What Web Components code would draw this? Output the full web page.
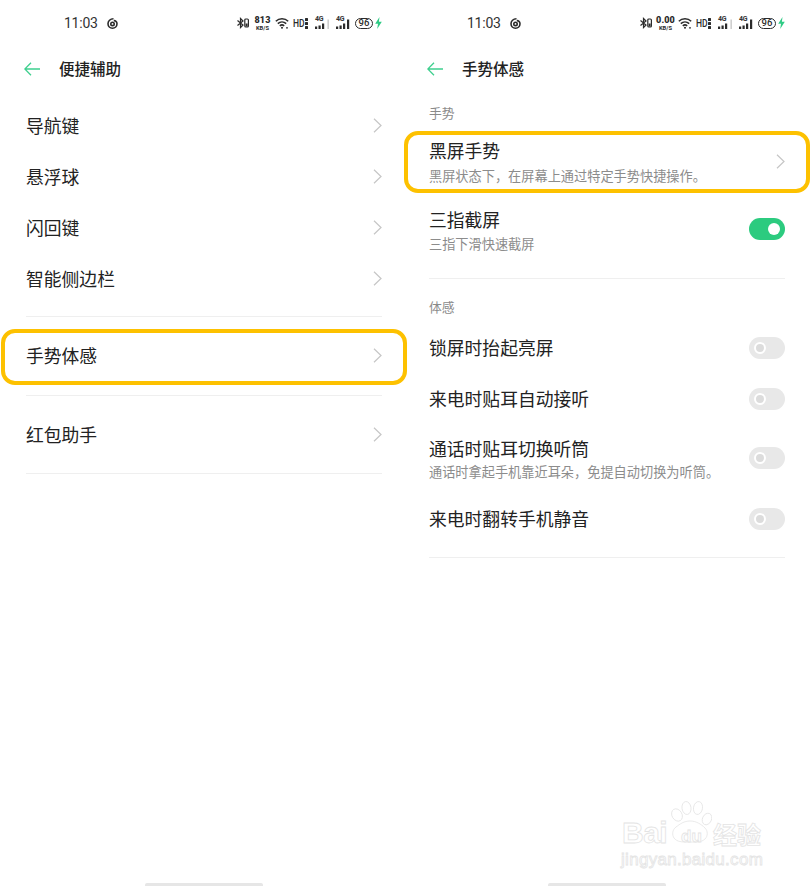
<!DOCTYPE html>
<html lang="zh"><head><meta charset="utf-8"><title>手势体感</title>
<style>
html,body{margin:0;background:#fff}
body{width:810px;height:886px;overflow:hidden;position:relative;font-family:"Noto Sans CJK SC","Noto Sans",sans-serif}
#app{display:grid;grid-template-columns:403px 407px;height:886px}
</style></head><body>
<div id="app">
 <phone-panel title-text="便捷辅助" speed="813">
  <setting-row title="导航键" kind="chevron" style="--ctl:-1px"></setting-row>
  <setting-row title="悬浮球" kind="chevron" style="--ctl:-1px"></setting-row>
  <setting-row title="闪回键" kind="chevron" style="--ctl:-1px"></setting-row>
  <setting-row title="智能侧边栏" kind="chevron" style="--ctl:-1px"></setting-row>
  <list-divider style="--before:11px;--after:14px"></list-divider>
  <setting-row title="手势体感" kind="chevron" highlight style="--ctl:-1px;--hl-top:-2px;--hl-bottom:-3px"></setting-row>
  <list-divider style="--before:13px;--after:14px"></list-divider>
  <setting-row title="红包助手" kind="chevron" style="--ctl:-1px"></setting-row>
  <list-divider style="--before:12px;--after:0px"></list-divider>
 </phone-panel>
 <phone-panel title-text="手势体感" speed="0.00">
  <section-label style="--h:28px;--up:4px">手势</section-label>
  <setting-row title="黑屏手势" sub="黑屏状态下，在屏幕上通过特定手势快捷操作。" kind="chevron" highlight style="--hl-top:2px;--hl-bottom:5px;--ctl:-2px;--gap:6px"></setting-row>
  <setting-row title="三指截屏" sub="三指下滑快速截屏" kind="on" style="--ctl:-3px;--gap:5px"></setting-row>
  <list-divider style="--before:11px;--after:15px"></list-divider>
  <section-label style="--h:29px;--up:2px">体感</section-label>
  <setting-row title="锁屏时抬起亮屏" kind="off"></setting-row>
  <setting-row title="来电时贴耳自动接听" kind="off"></setting-row>
  <setting-row title="通话时贴耳切换听筒" sub="通话时拿起手机靠近耳朵，免提自动切换为听筒。" kind="off" style="--ctl:-1px;--gap:4px;--txt-up:0px"></setting-row>
  <setting-row title="来电时翻转手机静音" kind="off"></setting-row>
  <list-divider style="--before:12px;--after:0px"></list-divider>
 </phone-panel>
</div>
<baidu-mark></baidu-mark>
<script>
function def(name, html){
  customElements.define(name, class extends HTMLElement{
    connectedCallback(){
      if(this.shadowRoot) return;
      const r=this.attachShadow({mode:'open'});
      r.innerHTML = typeof html==='function' ? html(this) : html;
    }
  });
}
const CJK='"Noto Sans CJK SC","Noto Sans",sans-serif';
const bars=(last)=>`<svg width="14" height="14" viewBox="0 0 14 14" fill="#2b2b2b"><rect x="0" y="10.500" width="2.200" height="2.500"/><rect x="3.500" y="9.500" width="2.200" height="3.500"/><rect x="7" y="7.500" width="2.200" height="5.500"/>${last?'<rect x="11" y="3.500" width="2.200" height="9.500"/>':'<rect x="12.500" y="3.500" width="1.300" height="9.500" fill="#c4c4c4"/>'}</svg>`;

def('status-bar', el=>`<style>
:host{display:flex;align-items:center;height:46px;padding-left:64px;box-sizing:border-box;color:#222;font-family:Roboto,"Liberation Sans",sans-serif}
.time{font-size:14px;letter-spacing:-.25px;color:#333;width:43px;flex:none}
svg{display:block;flex:none}
.gap{flex:none;width:119px}
.sp{margin-left:6px;display:flex;flex-direction:column;align-items:center;width:15px;line-height:1;font-weight:700;color:#2b2b2b;flex:none}
.sp b{font-size:9px;line-height:9px;letter-spacing:.1px}.sp i{font-style:normal;font-size:5.8px;line-height:6px}
.hd{display:block;font-size:11.500px;font-weight:500;margin-left:4px;width:12px;color:#2b2b2b;flex:none;white-space:nowrap;transform:scaleX(.74);transform-origin:left center}
.sig{position:relative;width:14px;height:14px;flex:none}
.sig span{position:absolute;left:0;top:-1px;font-size:7px;font-weight:700;color:#333;line-height:8px;letter-spacing:-.2px}
.bat{box-sizing:border-box;margin-left:5px;width:18px;height:11px;border:1.500px solid #2b2b2b;border-radius:5.500px;font-size:9.500px;line-height:8px;text-align:center;color:#2b2b2b;flex:none;font-weight:500}
</style>
<span class="time">11:03</span>
<svg width="11" height="11" viewBox="0 0 11 11" fill="none" stroke="#2b2b2b" stroke-width="1.600"><path d="M6.500 .8C3.200 .8 1 3 1 5.800 1 8.300 3 10.200 5.500 10.200s4.500-1.900 4.500-4.400c0-2.100-1.700-3.300-3.200-3.100"/><circle cx="5.500" cy="5.900" r="1.700"/></svg>
<span class="gap"></span>
<svg width="12" height="12" viewBox="0 0 12 12" fill="none" stroke="#2b2b2b" stroke-width="1.200"><path d="M.5 3.500 6 8 3.500 10.500V1.500L6 4 .5 8.500"/><rect x="7.800" y="2" width="3.600" height="8" rx="1"/><rect x="8.600" y="6.500" width="2" height="3" fill="#2b2b2b" stroke="none"/></svg>
<span class="sp"><b>${el.getAttribute('speed')}</b><i>KB/S</i></span>
<svg style="margin-left:5px" width="14" height="12" viewBox="0 0 14 12" fill="none" stroke="#2b2b2b" stroke-width="1.500"><path d="M.8 4.200C4.200.8 9.800.8 13.200 4.200M2.800 6.600C5.200 4.400 8.800 4.400 11.200 6.600M4.800 8.800C6 7.800 8 7.800 9.200 8.800"/><circle cx="7" cy="10.800" r="1" fill="#2b2b2b" stroke="none"/><circle cx="12" cy="10.800" r=".9" fill="#2b2b2b" stroke="none"/></svg>
<span class="hd">HD</span>
<svg width="3" height="11" viewBox="0 0 3 11" fill="#2b2b2b"><rect width="3" height="3" rx=".5"/><rect y="4" width="3" height="3" rx=".5"/><rect y="8" width="3" height="3" rx=".5"/></svg>
<span class="sig" style="margin-left:7px"><span>4G</span>${bars(false)}</span>
<span class="sig" style="margin-left:7px"><span>4G</span>${bars(true)}</span>
<span class="bat">96</span>
<svg style="margin-left:2px" width="7" height="12" viewBox="0 0 7 12" fill="#2fcb85"><path d="M4.500 0 .2 6.800H3L2.200 12 6.800 4.800H3.900Z"/></svg>`);

def('nav-header', el=>`<style>
:host{display:flex;align-items:center;height:46px;padding-left:24px;box-sizing:border-box}
svg{display:block;flex:none}
span{margin-left:19px;font:500 15.500px/20px ${CJK};color:#222;position:relative;top:-1px}
</style>
<svg width="16" height="14" viewBox="0 0 16 14" fill="none" stroke="#3ecf8e" stroke-width="1.300"><path d="M16 7H.8M7 .8.800 7 7 13.200"/></svg>
<span>${el.getAttribute('title-text')}</span>`);

def('phone-panel', el=>`<style>
:host{display:block;min-width:0}
.list{box-sizing:border-box;width:356px;margin-left:26px;padding-top:8.500px;display:flex;flex-direction:column}
.home{position:absolute;bottom:0;width:118px;height:3px;background:#e6e6e6;border-radius:2px 2px 0 0;margin-left:145px}
</style>
<status-bar speed="${el.getAttribute('speed')}"></status-bar>
<nav-header title-text="${el.getAttribute('title-text')}"></nav-header>
<div class="list"><slot></slot></div>
<div class="home"></div>`);

def('section-label', `<style>
:host{display:flex;align-items:center;box-sizing:border-box;height:var(--h,28px);padding-bottom:var(--up,0);font:400 12.800px/18px ${CJK};color:#8a8a8a}
</style><slot></slot>`);

def('list-divider', `<style>
:host{display:block;height:1px;background:#efefef;margin:var(--before,12px) 0 var(--after,13px)}
</style>`);

def('setting-row', el=>{
  const sub=el.getAttribute('sub'), kind=el.getAttribute('kind'), hl=el.hasAttribute('highlight');
  const ctl = kind==='chevron'
    ? `<svg class="chev" width="9" height="15" viewBox="0 0 9 15" fill="none" stroke="#c6c6c6" stroke-width="1.200"><path d="M1 .8 8 7.500 1 14.200"/></svg>`
    : `<span class="tg ${kind}"><i></i></span>`;
  return `<style>
:host{display:flex;position:relative;align-items:center;justify-content:space-between;height:${sub?69:51}px}
.txt{display:flex;flex-direction:column;gap:var(--gap,5px);padding-bottom:var(--txt-up,2px)}
.t{font:400 17.800px/20px ${CJK};color:#222}
.s{font:400 13.200px/19px ${CJK};color:#8c8c8c;white-space:nowrap}
.ctl{position:relative;top:var(--ctl,0);display:flex;flex:none}
.chev{display:block}
.tg{position:relative;display:block;width:36px;height:22px;border-radius:11px}
.tg.on{background:#2ccb7f}
.tg.off{background:#e8e8e8}
.tg i{position:absolute;top:5px;width:12px;height:12px;border-radius:50%;box-sizing:border-box}
.tg.on i{left:19px;background:#fff}
.tg.off i{left:5px;background:#dcdcdc;border:2.500px solid #fff}
.hl{position:absolute;left:-25px;right:-25px;top:var(--hl-top,0);bottom:var(--hl-bottom,0);border:4px solid #fdc100;border-radius:14px;pointer-events:none}
</style>
<div class="txt"><span class="t">${el.getAttribute('title')}</span>${sub?`<span class="s">${sub}</span>`:''}</div>
<span class="ctl">${ctl}</span>${hl?'<span class="hl"></span>':''}`;
});

def('baidu-mark', `<style>
:host{position:absolute;left:620px;top:800px;width:150px;height:70px;color:#fff;pointer-events:none}
span{position:absolute;white-space:nowrap;-webkit-text-stroke:.8px #e4e4e4}
svg{position:absolute;left:50px;top:1px}
.bai{left:2px;top:18px;font:700 30px/30px "Liberation Sans",sans-serif;letter-spacing:-.5px}
.du{left:61px;top:28px;font:700 17px/17px "Liberation Sans",sans-serif}
.jy{left:93px;top:21px;font:700 24px/26px ${CJK}}
.url{left:1px;top:50px;font:400 17px/19px "Liberation Sans",sans-serif;letter-spacing:.3px}
</style>
<svg width="42" height="45" viewBox="0 0 42 45" fill="#fff" stroke="#e4e4e4" stroke-width=".8"><ellipse cx="7" cy="14" rx="5" ry="6.500" transform="rotate(-30 7 14)"/><ellipse cx="16.500" cy="7" rx="4.500" ry="6.500" transform="rotate(-8 16.500 7)"/><ellipse cx="28" cy="7" rx="4.500" ry="6.500" transform="rotate(10 28 7)"/><ellipse cx="37" cy="18" rx="4.500" ry="6" transform="rotate(25 37 18)"/><path d="M20 20c-6 0-10 3-14 6-4 3-4 8-2 11 3 4 8 4 14 4 6 0 13 1 17-3 3-3 3-8 0-11-4-4-9-7-15-7Z"/></svg>
<span class="bai">Bai</span><span class="du">du</span><span class="jy">经验</span><span class="url">jingyan.baidu.com</span>`);
</script>
</body></html>
